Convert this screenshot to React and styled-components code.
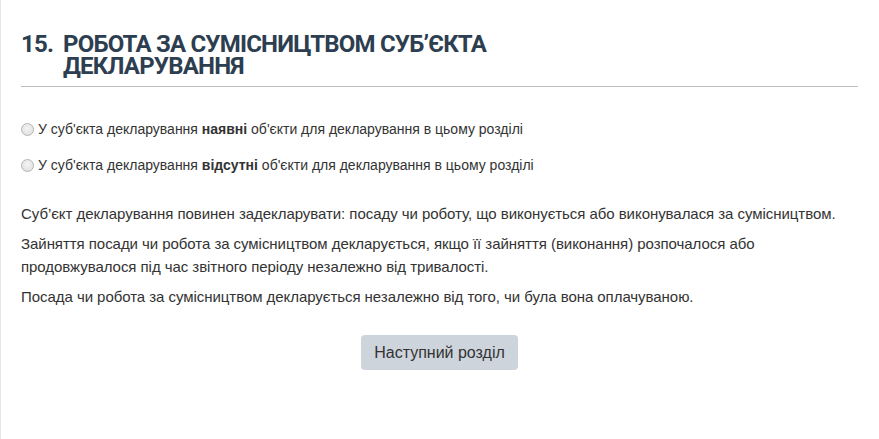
import React from "react";
import styled, { createGlobalStyle } from "styled-components";

const Global = createGlobalStyle`
  html, body { margin: 0; padding: 0; background: #fff; }
  body { font-family: "Liberation Sans", Arial, sans-serif; color: #333; }
`;

const Page = styled.div`
  box-sizing: border-box;
  width: 879px;
  height: 439px;
  border-left: 1px solid #e6e6e6;
  padding: 33px 21px 0 20px;
`;

const Heading = styled.h2`
  display: flex;
  margin: 0;
  font-family: Roboto, "Open Sans", sans-serif;
  font-weight: 700;
  font-size: 24px;
  line-height: 22px;
  color: #2d3e50;
  text-transform: uppercase;
  letter-spacing: -0.8px;
  padding-bottom: 9px;
  border-bottom: 1px solid #bdbdbd;
`;

const Num = styled.span`
  flex: 0 0 42px;
`;

const Title = styled.span`
  width: 445px;
`;

const Options = styled.div`
  display: flex;
  flex-direction: column;
  gap: 18px;
  margin-top: 33px;
`;

const Option = styled.label`
  display: flex;
  align-items: center;
  gap: 4px;
  font-size: 14px;
  line-height: 18px;
  color: #333;
`;

const Radio = styled.span`
  box-sizing: border-box;
  width: 13px;
  height: 13px;
  border-radius: 50%;
  border: 1px solid #b4b4b4;
  background: radial-gradient(circle at 50% 40%, #f4f4f4 0%, #dcdcdc 100%);
`;

const Text = styled.div`
  margin-top: 28px;
`;

const Para = styled.p`
  margin: 0 0 7px;
  font-size: 15px;
  line-height: 23px;
  color: #333;
  letter-spacing: -0.05px;
`;

const Actions = styled.div`
  display: flex;
  justify-content: center;
  margin-top: 27px;
`;

const Button = styled.button`
  width: 157px;
  height: 35px;
  border: none;
  border-radius: 4px;
  background: #cdd4dc;
  color: #333;
  font-family: "Liberation Sans", Arial, sans-serif;
  font-size: 16px;
  cursor: pointer;
`;

export default function App() {
  return (
    <>
      <Global />
      <Page>
        <Heading>
          <Num>15.</Num>
          <Title>Робота за сумісництвом суб’єкта декларування</Title>
        </Heading>
        <Options>
          <Option>
            <Radio />
            <span>
              У суб'єкта декларування <b>наявні</b> об'єкти для декларування в цьому розділі
            </span>
          </Option>
          <Option>
            <Radio />
            <span>
              У суб'єкта декларування <b>відсутні</b> об'єкти для декларування в цьому розділі
            </span>
          </Option>
        </Options>
        <Text>
          <Para>
            Суб’єкт декларування повинен задекларувати: посаду чи роботу, що виконується або виконувалася за сумісництвом.
          </Para>
          <Para>
            Зайняття посади чи робота за сумісництвом декларується, якщо її зайняття (виконання) розпочалося або
            <br />
            продовжувалося під час звітного періоду незалежно від тривалості.
          </Para>
          <Para>
            Посада чи робота за сумісництвом декларується незалежно від того, чи була вона оплачуваною.
          </Para>
        </Text>
        <Actions>
          <Button>Наступний розділ</Button>
        </Actions>
      </Page>
    </>
  );
}
